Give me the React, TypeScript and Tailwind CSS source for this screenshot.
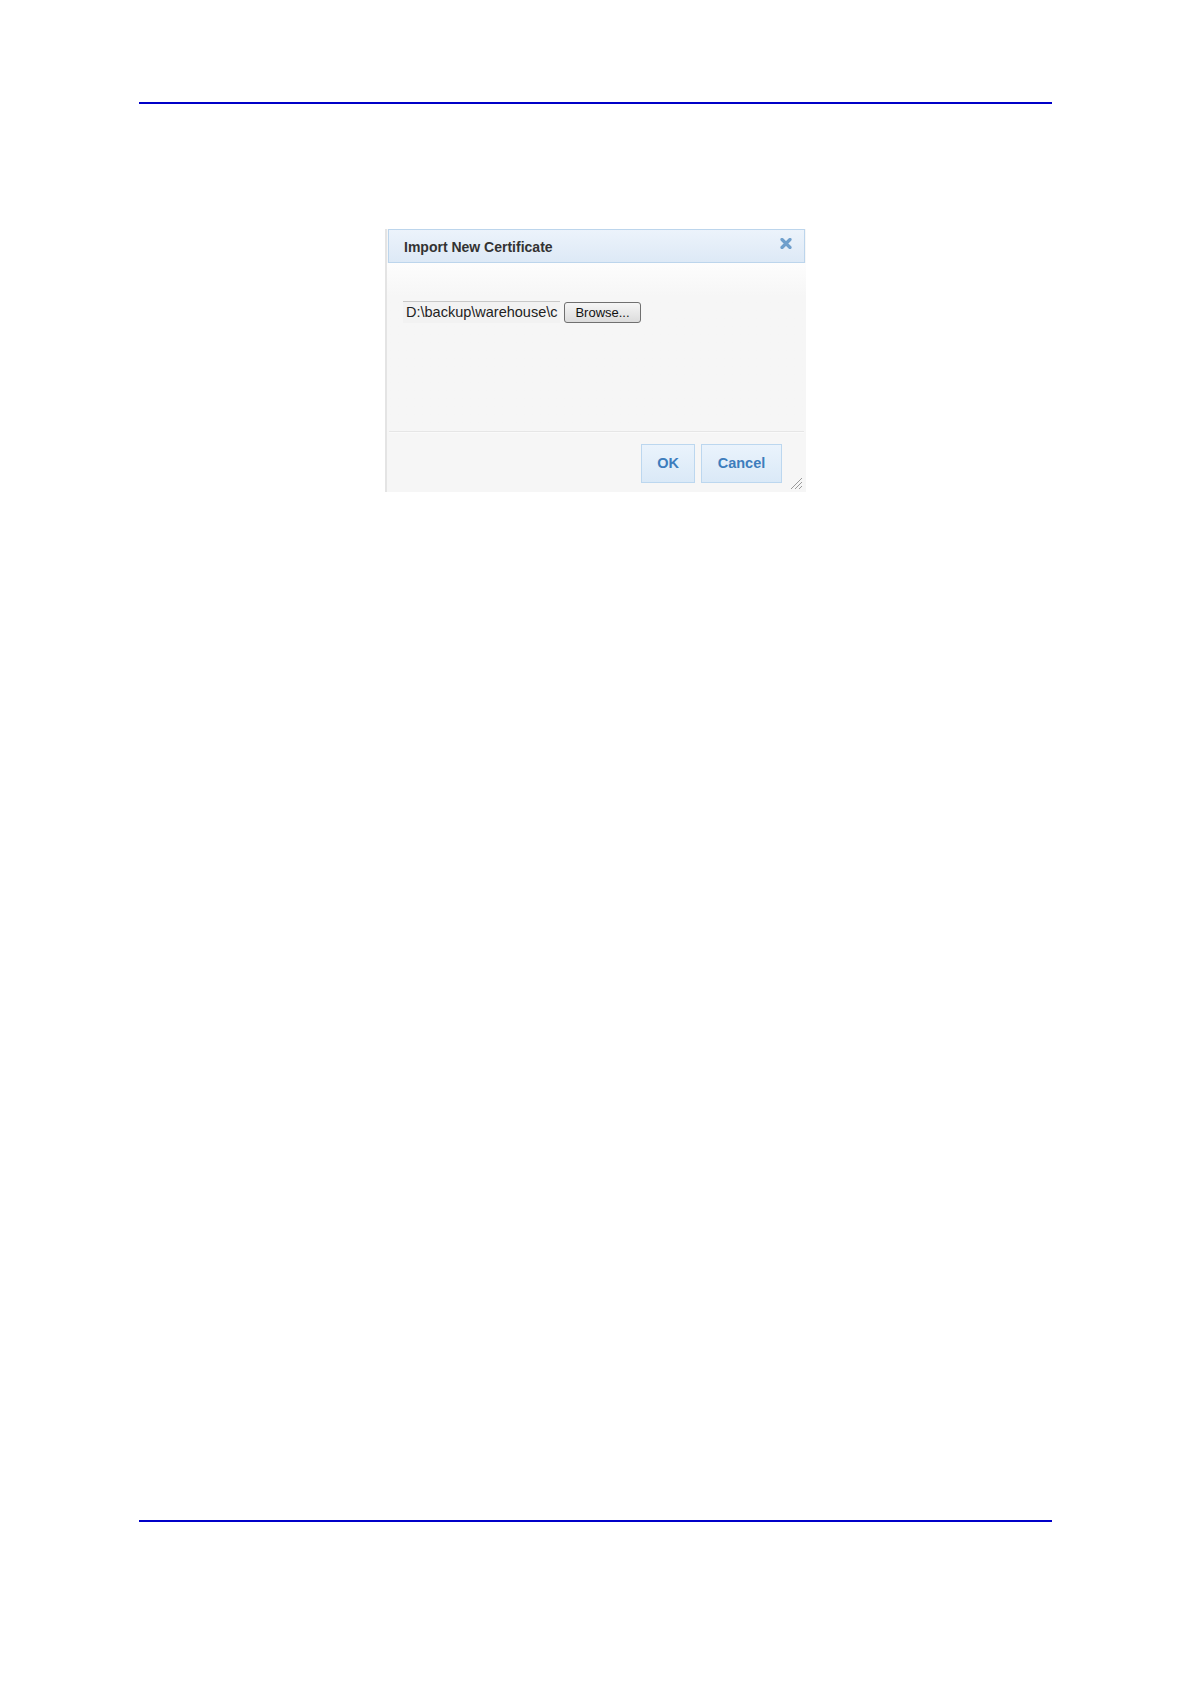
import React from "react";

export default function App() {
  return (
    <div className="w-[1191px] h-[1683px] bg-white font-['Liberation_Sans',Arial,sans-serif] flex flex-col">
      <div className="pt-[102px] pl-[139px]">
        <div className="w-[913px] h-[2px] bg-[#0000c8]" />
      </div>

      <div className="mt-[125px] ml-[385px] w-[421px] h-[263px] bg-[#f6f6f6] border-l-2 border-[#e4e4e4] flex flex-col">
        {/* header */}
        <div className="mx-[1px] h-[34px] border border-[#bcd5ec] bg-gradient-to-b from-[#ecf3fb] to-[#dde9f6] flex items-center justify-between pl-[15px] pr-[12px]">
          <span className="text-[14px] font-bold text-[#333333] pt-[2px]">Import New Certificate</span>
          <svg width="12" height="11" viewBox="0 0 12 11" className="mt-[-5px]">
            <path d="M2 1.5 L10 9.5 M10 1.5 L2 9.5" stroke="#6f9fcc" strokeWidth="3.2" strokeLinecap="round" />
          </svg>
        </div>

        {/* body */}
        <div className="flex-1 bg-gradient-to-b from-[#fdfdfd] to-[#f6f6f6] to-[20%] pl-[16px] pt-[38px]">
          <div className="flex items-center gap-[4px]">
            <div className="w-[157px] h-[22px] bg-[#f2f2f2] border-t border-[#c8c8c8] whitespace-nowrap text-[14.5px] leading-[21px] text-[#222222] pl-[3px]">
              D:\backup\warehouse\c
            </div>
            <button className="w-[77px] h-[21px] rounded-[3px] border border-[#707070] bg-gradient-to-b from-[#f6f6f6] to-[#dcdcdc] text-[13px] leading-[19px] text-[#111111] text-center">
              Browse...
            </button>
          </div>
        </div>

        {/* separator */}
        <div className="mx-[2px] h-[2px] bg-[#e6e6e6] border-b border-[#fafafa]" />

        {/* footer */}
        <div className="h-[59px] relative flex justify-end items-start pt-[11px] pr-[24px] gap-[6px]">
          <button className="w-[54px] h-[39px] border border-[#bcd7ef] bg-gradient-to-b from-[#eaf3fc] to-[#dae9f7] text-[14.5px] font-bold text-[#3d7dbd]">
            OK
          </button>
          <button className="w-[81px] h-[39px] border border-[#bcd7ef] bg-gradient-to-b from-[#eaf3fc] to-[#dae9f7] text-[14.5px] font-bold text-[#3d7dbd]">
            Cancel
          </button>
          <svg width="14" height="14" viewBox="0 0 14 14" className="absolute right-[3px] bottom-[2px]">
            <path d="M13 2 L2 13 M13 6 L6 13 M13 10 L10 13" stroke="#9a9a9a" strokeWidth="1" />
          </svg>
        </div>
      </div>

      <div className="mt-[1028px] pl-[139px]">
        <div className="w-[913px] h-[2px] bg-[#0000c8]" />
      </div>
    </div>
  );
}
